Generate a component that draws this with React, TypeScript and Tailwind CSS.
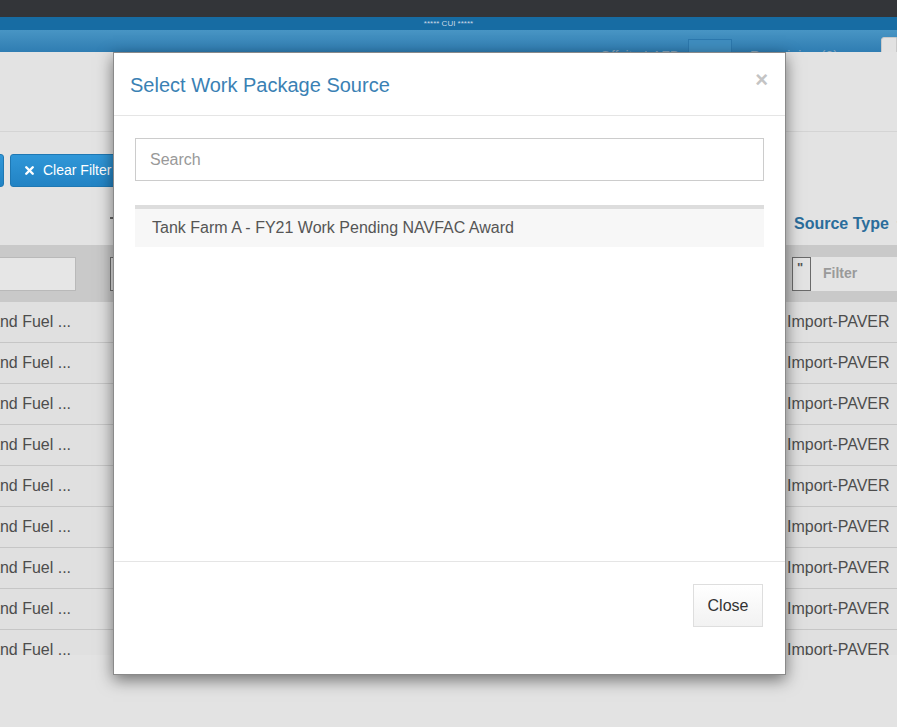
import { X } from 'lucide-react';

const rows = Array.from({ length: 9 }, (_, i) => i);

function NavBar() {
  return (
    <div>
      <div className="h-[17px] bg-[#333539]" />
      <div className="h-[13px] bg-[#176ca3] flex items-center justify-center text-[8px] leading-none text-[#c9d8e6]">
        ***** CUI *****
      </div>
      <div className="h-[22px] bg-gradient-to-b from-[#4895c4] to-[#2f7db2] overflow-hidden relative">
        <div className="flex items-start pt-[16px] text-[14px] text-[#85a3ba]">
          <span className="ml-[600px] w-[88px] whitespace-nowrap">Offsite LAFB</span>
          <div className="mt-[-7px] w-[44px] h-[20px] border border-[#2c78ad] bg-[#3f8dbf]" />
          <span className="ml-[18px] whitespace-nowrap">Remaining (0)</span>
        </div>
        <div className="absolute right-0 top-[7px] w-[16px] h-[20px] bg-[#e2e2e2] border border-[#c9c9c9] rounded-l-[3px]" />
      </div>
    </div>
  );
}

function Page() {
  return (
    <div className="flex flex-col">
      <div className="h-[80px] border-b border-[#d4d4d4]" />
      <div className="h-[68px] flex items-start pt-[22px] gap-[6px] -ml-[60px]">
        <div className="w-[64px] h-[33px] bg-gradient-to-b from-[#3097d8] to-[#2283c4] border border-[#1f78b3] rounded-[3px]" />
        <div className="h-[33px] pl-[12px] pr-[14px] flex items-center gap-[7px] bg-gradient-to-b from-[#3097d8] to-[#2283c4] border border-[#1f78b3] rounded-[3px] text-white text-[14px]">
          <X size={13} strokeWidth={4.5} />
          <span className="whitespace-nowrap">Clear Filter</span>
        </div>
      </div>
      {/* column labels */}
      <div className="h-[45px] flex items-center">
        <div className="ml-[110px] mt-[-10px] w-[3px] h-[2px] bg-[#666]" />
        <div className="ml-auto w-[103px] flex items-center text-[16px] font-bold text-[#2b6d9b] whitespace-nowrap mt-[3px]">
          Source Type
          <span className="ml-[8px] text-[#b9b9b9] text-[14px]">▾</span>
        </div>
      </div>
      {/* filter row */}
      <div className="h-[57px] bg-[#c9c9c9] flex items-center">
        <div className="w-[76px] h-[34px] bg-[#e6e6e6] border border-[#b9b9b9] border-l-0" />
        <div className="ml-[34px] w-[12px] h-[34px] border border-[#6f6f6f] bg-[#e3e3e3]" />
        <div className="ml-auto flex items-center">
          <div className="w-[19px] h-[34px] border border-[#6a6a6a] bg-[#e3e3e3] text-[13px] font-bold text-[#555] pl-[4px] leading-[20px]">
            "
          </div>
          <div className="w-[86px] h-[34px] bg-[#e4e4e4] flex items-center pl-[12px] text-[14px] font-bold text-[#9a9a9a]">
            Filter
          </div>
        </div>
      </div>
      {/* rows */}
      <div className="h-[353px] overflow-hidden">
        {rows.map((r) => (
          <div
            key={r}
            className="h-[41px] bg-[#e0e0e0] border-b border-[#c6c6c6] flex items-center text-[16px] text-[#4d4d4d]"
          >
            <span className="-ml-[9px] whitespace-nowrap">and Fuel ...</span>
            <span className="ml-auto w-[110px] whitespace-nowrap">Import-PAVER</span>
          </div>
        ))}
      </div>
    </div>
  );
}

function Modal() {
  return (
    <div className="absolute left-[113px] top-[52px] w-[673px] h-[623px] bg-white border border-[#8a8a8a] shadow-[0_5px_15px_rgba(0,0,0,0.5)] flex flex-col">
      <div className="h-[63px] border-b border-[#e5e5e5] flex items-center px-[16px] relative">
        <h4 className="text-[20px] text-[#3a81b4] leading-none mt-[1px]">Select Work Package Source</h4>
        <span className="absolute right-[17px] top-[16px] text-[22px] font-bold text-[#c4c4c4] leading-none">
          ×
        </span>
      </div>
      <div className="flex-1 px-[21px] pt-[22px]">
        <div className="h-[43px] border border-[#cccccc] flex items-center pl-[14px] text-[16px] text-[#999]">
          Search
        </div>
        <div className="mt-[24px] h-[42px] border-t-[4px] border-[#dddddd] bg-[#f7f7f7] flex items-center pl-[17px] text-[16px] text-[#555]">
          Tank Farm A - FY21 Work Pending NAVFAC Award
        </div>
      </div>
      <div className="h-[113px] border-t border-[#e5e5e5] flex justify-end items-start pt-[22px] pr-[22px]">
        <div className="w-[70px] h-[43px] border border-[#dedede] bg-gradient-to-b from-white to-[#f2f2f2] flex items-center justify-center text-[16px] text-[#333]">
          Close
        </div>
      </div>
    </div>
  );
}

export default function App() {
  return (
    <div className="w-[897px] h-[727px] relative overflow-hidden bg-[#e3e3e3] font-['Liberation_Sans',Arial,sans-serif]">
      <NavBar />
      <Page />
      <Modal />
    </div>
  );
}
